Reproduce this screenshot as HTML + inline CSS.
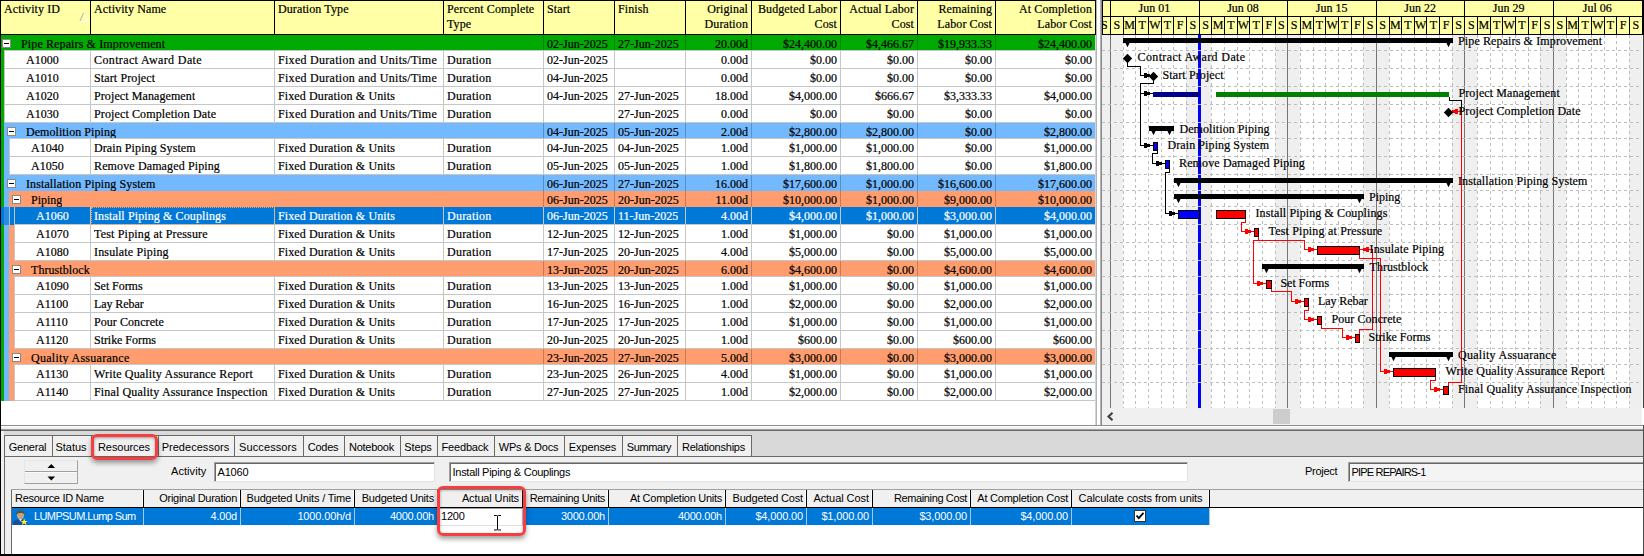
<!DOCTYPE html>
<html lang="en"><head><meta charset="utf-8"><title>P6 Activities</title><style>
html,body{margin:0;padding:0}
body{width:1644px;height:556px;overflow:hidden;background:#fff;position:relative;font-family:"Liberation Serif",serif;font-size:12px;color:#000}
#tbl div,#bp div,.b{position:absolute;box-sizing:content-box}
#tbl,#bp{position:absolute;left:0;top:0}
.hd{background:#000}
.hy{background:#FFFFA5}
.vs{width:1px;background:#000}
.ht{font-size:12px;line-height:15px;-webkit-text-stroke:.2px;white-space:nowrap;box-sizing:border-box!important;letter-spacing:.1px}
.t{white-space:nowrap;line-height:19px;-webkit-text-stroke:.2px;overflow:hidden;font-size:12px}
.t.r{text-align:right}
.t.w{color:#fff}
.hl{height:1px;background:#C6C6C6}
.cs{width:1px;background:#C6C6C6}
.gs{width:1px;background:rgba(0,0,0,.22)}
.ex{width:7px;height:7px;border:1px solid #8a8a8a;background:#fff}
.ex i{position:absolute;left:1px;top:3px;width:5px;height:1px;background:#000}
.foc{border:1px dotted #f3a25c}
svg text.gt{font-family:"Liberation Serif",serif;font-size:12px;fill:#000;stroke:#000;stroke-width:.2px}
svg text.gl{font-family:"Liberation Serif",serif;font-size:12px;fill:#000;stroke:#000;stroke-width:.2px}
#bp{font-family:"Liberation Sans",sans-serif;font-size:11px}
.tab{top:436px;height:20px;background:#f0f0f0;border-left:1px solid #696969;border-top:1px solid #696969;box-sizing:border-box!important;line-height:22px;text-align:center;white-space:nowrap;margin-top:-1px;height:21px;overflow:hidden;padding-right:2px}
.spin{background:#f0f0f0;border:1px solid #e6e6e6;border-right-color:#a0a0a0;border-bottom-color:#a0a0a0;box-sizing:border-box!important}
.spin .sl{left:0;top:10px;width:52px;height:1px;background:#a0a0a0;border-bottom:1px solid #fafafa}
.lb{line-height:18px;white-space:nowrap;font-size:11px}
.inp{background:#fff;border:1px solid #e3e3e3;border-top:1px solid #a0a0a0;border-left:1px solid #a0a0a0;box-shadow:inset 1px 1px 0 #696969;box-sizing:border-box!important;line-height:18px;padding-left:2.5px;white-space:nowrap;overflow:hidden}
.inp.ro{background:#f4f4f4}
.rh{line-height:16px;white-space:nowrap;box-sizing:border-box!important;height:17px;overflow:hidden}
.rv{line-height:17px;white-space:nowrap;box-sizing:border-box!important;height:17px;color:#fff}
.red{border:3px solid #f63d40;border-radius:6px;box-sizing:border-box!important;box-shadow:0 3px 5px rgba(0,0,0,.38),inset 0 1px 3px rgba(0,0,0,.35)}
</style></head><body>
<div id="tbl">
<div class="hd" style="left:0;top:0;width:1096px;height:35px"></div>
<div class="hy" style="left:1px;top:1px;width:1094px;height:33px"></div>
<div class="vs" style="left:90px;top:1px;height:33px"></div>
<div class="ht" style="left:1px;top:2px;width:89px;padding-left:3px">Activity ID</div>
<div class="vs" style="left:274px;top:1px;height:33px"></div>
<div class="ht" style="left:91px;top:2px;width:183px;padding-left:3px">Activity Name</div>
<div class="vs" style="left:443px;top:1px;height:33px"></div>
<div class="ht" style="left:275px;top:2px;width:168px;padding-left:3px">Duration Type</div>
<div class="vs" style="left:543px;top:1px;height:33px"></div>
<div class="ht" style="left:444px;top:2px;width:99px;padding-left:3px">Percent Complete<br>Type</div>
<div class="vs" style="left:614px;top:1px;height:33px"></div>
<div class="ht" style="left:544px;top:2px;width:70px;padding-left:3px">Start</div>
<div class="vs" style="left:685px;top:1px;height:33px"></div>
<div class="ht" style="left:615px;top:2px;width:70px;padding-left:3px">Finish</div>
<div class="vs" style="left:751px;top:1px;height:33px"></div>
<div class="ht" style="left:686px;top:2px;width:65px;padding-right:3px;text-align:right">Original<br>Duration</div>
<div class="vs" style="left:840px;top:1px;height:33px"></div>
<div class="ht" style="left:752px;top:2px;width:88px;padding-right:3px;text-align:right">Budgeted Labor<br>Cost</div>
<div class="vs" style="left:917px;top:1px;height:33px"></div>
<div class="ht" style="left:841px;top:2px;width:76px;padding-right:3px;text-align:right">Actual Labor<br>Cost</div>
<div class="vs" style="left:995px;top:1px;height:33px"></div>
<div class="ht" style="left:918px;top:2px;width:77px;padding-right:3px;text-align:right">Remaining<br>Labor Cost</div>
<div class="ht" style="left:996px;top:2px;width:99px;padding-right:3px;text-align:right">At Completion<br>Labor Cost</div>
<svg style="position:absolute;left:79px;top:12px" width="10" height="10"><path d="M5 1.5 L8.5 9.5 L1 9.5" fill="none" stroke="#fff" stroke-width="1"/><path d="M1 9 L4.5 1" fill="none" stroke="#b0b0b0" stroke-width="1"/></svg>
<div class="b" style="left:1px;top:35px;width:1094px;height:16px;background:#00AA00"></div>
<div class="ex" style="left:2px;top:39px"><i></i></div>
<div class="t" style="left:21px;top:35px;height:16px;letter-spacing:0.124px">Pipe Repairs &amp; Improvement</div>
<div class="gs" style="left:543px;top:35px;height:16px"></div>
<div class="t" style="left:547px;top:35px;height:16px">02-Jun-2025</div>
<div class="gs" style="left:614px;top:35px;height:16px"></div>
<div class="t" style="left:618px;top:35px;height:16px">27-Jun-2025</div>
<div class="gs" style="left:685px;top:35px;height:16px"></div>
<div class="t r" style="left:686px;width:62px;top:35px;height:16px">20.00d</div>
<div class="gs" style="left:751px;top:35px;height:16px"></div>
<div class="t r" style="left:752px;width:85px;top:35px;height:16px">$24,400.00</div>
<div class="gs" style="left:840px;top:35px;height:16px"></div>
<div class="t r" style="left:841px;width:73px;top:35px;height:16px">$4,466.67</div>
<div class="gs" style="left:917px;top:35px;height:16px"></div>
<div class="t r" style="left:918px;width:74px;top:35px;height:16px">$19,933.33</div>
<div class="gs" style="left:995px;top:35px;height:16px"></div>
<div class="t r" style="left:996px;width:96px;top:35px;height:16px">$24,400.00</div>
<div class="hl" style="left:4px;top:50px;width:1091px"></div>
<div class="b" style="left:1px;top:51px;width:3px;height:18px;background:#00AA00"></div>
<div class="b" style="left:4px;top:51px;width:1091px;height:17px;background:#fff;border-left:1px solid #C6C6C6"></div>
<div class="hl" style="left:4px;top:68px;width:1091px"></div>
<div class="t" style="left:26px;top:51px;height:18px">A1000</div>
<div class="cs" style="left:90px;top:51px;height:17px"></div>
<div class="t" style="left:94px;top:51px;height:18px;letter-spacing:0.376px">Contract Award Date</div>
<div class="cs" style="left:274px;top:51px;height:17px"></div>
<div class="t" style="left:278px;top:51px;height:18px;letter-spacing:0.291px">Fixed Duration and Units/Time</div>
<div class="cs" style="left:443px;top:51px;height:17px"></div>
<div class="t" style="left:447px;top:51px;height:18px;letter-spacing:0.23px">Duration</div>
<div class="cs" style="left:543px;top:51px;height:17px"></div>
<div class="t" style="left:547px;top:51px;height:18px;letter-spacing:0px">02-Jun-2025</div>
<div class="cs" style="left:614px;top:51px;height:17px"></div>
<div class="cs" style="left:685px;top:51px;height:17px"></div>
<div class="t r" style="left:686px;width:62px;top:51px;height:18px">0.00d</div>
<div class="cs" style="left:751px;top:51px;height:17px"></div>
<div class="t r" style="left:752px;width:85px;top:51px;height:18px">$0.00</div>
<div class="cs" style="left:840px;top:51px;height:17px"></div>
<div class="t r" style="left:841px;width:73px;top:51px;height:18px">$0.00</div>
<div class="cs" style="left:917px;top:51px;height:17px"></div>
<div class="t r" style="left:918px;width:74px;top:51px;height:18px">$0.00</div>
<div class="cs" style="left:995px;top:51px;height:17px"></div>
<div class="t r" style="left:996px;width:96px;top:51px;height:18px">$0.00</div>
<div class="b" style="left:1px;top:69px;width:3px;height:18px;background:#00AA00"></div>
<div class="b" style="left:4px;top:69px;width:1091px;height:17px;background:#fff;border-left:1px solid #C6C6C6"></div>
<div class="hl" style="left:4px;top:86px;width:1091px"></div>
<div class="t" style="left:26px;top:69px;height:18px">A1010</div>
<div class="cs" style="left:90px;top:69px;height:17px"></div>
<div class="t" style="left:94px;top:69px;height:18px;letter-spacing:0.119px">Start Project</div>
<div class="cs" style="left:274px;top:69px;height:17px"></div>
<div class="t" style="left:278px;top:69px;height:18px;letter-spacing:0.291px">Fixed Duration and Units/Time</div>
<div class="cs" style="left:443px;top:69px;height:17px"></div>
<div class="t" style="left:447px;top:69px;height:18px;letter-spacing:0.23px">Duration</div>
<div class="cs" style="left:543px;top:69px;height:17px"></div>
<div class="t" style="left:547px;top:69px;height:18px;letter-spacing:0px">04-Jun-2025</div>
<div class="cs" style="left:614px;top:69px;height:17px"></div>
<div class="cs" style="left:685px;top:69px;height:17px"></div>
<div class="t r" style="left:686px;width:62px;top:69px;height:18px">0.00d</div>
<div class="cs" style="left:751px;top:69px;height:17px"></div>
<div class="t r" style="left:752px;width:85px;top:69px;height:18px">$0.00</div>
<div class="cs" style="left:840px;top:69px;height:17px"></div>
<div class="t r" style="left:841px;width:73px;top:69px;height:18px">$0.00</div>
<div class="cs" style="left:917px;top:69px;height:17px"></div>
<div class="t r" style="left:918px;width:74px;top:69px;height:18px">$0.00</div>
<div class="cs" style="left:995px;top:69px;height:17px"></div>
<div class="t r" style="left:996px;width:96px;top:69px;height:18px">$0.00</div>
<div class="b" style="left:1px;top:87px;width:3px;height:18px;background:#00AA00"></div>
<div class="b" style="left:4px;top:87px;width:1091px;height:17px;background:#fff;border-left:1px solid #C6C6C6"></div>
<div class="hl" style="left:4px;top:104px;width:1091px"></div>
<div class="t" style="left:26px;top:87px;height:18px">A1020</div>
<div class="cs" style="left:90px;top:87px;height:17px"></div>
<div class="t" style="left:94px;top:87px;height:18px;letter-spacing:0.093px">Project Management</div>
<div class="cs" style="left:274px;top:87px;height:17px"></div>
<div class="t" style="left:278px;top:87px;height:18px;letter-spacing:0.121px">Fixed Duration &amp; Units</div>
<div class="cs" style="left:443px;top:87px;height:17px"></div>
<div class="t" style="left:447px;top:87px;height:18px;letter-spacing:0.23px">Duration</div>
<div class="cs" style="left:543px;top:87px;height:17px"></div>
<div class="t" style="left:547px;top:87px;height:18px;letter-spacing:0px">04-Jun-2025</div>
<div class="cs" style="left:614px;top:87px;height:17px"></div>
<div class="t" style="left:618px;top:87px;height:18px;letter-spacing:0px">27-Jun-2025</div>
<div class="cs" style="left:685px;top:87px;height:17px"></div>
<div class="t r" style="left:686px;width:62px;top:87px;height:18px">18.00d</div>
<div class="cs" style="left:751px;top:87px;height:17px"></div>
<div class="t r" style="left:752px;width:85px;top:87px;height:18px">$4,000.00</div>
<div class="cs" style="left:840px;top:87px;height:17px"></div>
<div class="t r" style="left:841px;width:73px;top:87px;height:18px">$666.67</div>
<div class="cs" style="left:917px;top:87px;height:17px"></div>
<div class="t r" style="left:918px;width:74px;top:87px;height:18px">$3,333.33</div>
<div class="cs" style="left:995px;top:87px;height:17px"></div>
<div class="t r" style="left:996px;width:96px;top:87px;height:18px">$4,000.00</div>
<div class="b" style="left:1px;top:105px;width:3px;height:18px;background:#00AA00"></div>
<div class="b" style="left:4px;top:105px;width:1091px;height:17px;background:#fff;border-left:1px solid #C6C6C6"></div>
<div class="hl" style="left:4px;top:122px;width:1091px"></div>
<div class="t" style="left:26px;top:105px;height:18px">A1030</div>
<div class="cs" style="left:90px;top:105px;height:17px"></div>
<div class="t" style="left:94px;top:105px;height:18px;letter-spacing:0.121px">Project Completion Date</div>
<div class="cs" style="left:274px;top:105px;height:17px"></div>
<div class="t" style="left:278px;top:105px;height:18px;letter-spacing:0.291px">Fixed Duration and Units/Time</div>
<div class="cs" style="left:443px;top:105px;height:17px"></div>
<div class="t" style="left:447px;top:105px;height:18px;letter-spacing:0.23px">Duration</div>
<div class="cs" style="left:543px;top:105px;height:17px"></div>
<div class="cs" style="left:614px;top:105px;height:17px"></div>
<div class="t" style="left:618px;top:105px;height:18px;letter-spacing:0px">27-Jun-2025</div>
<div class="cs" style="left:685px;top:105px;height:17px"></div>
<div class="t r" style="left:686px;width:62px;top:105px;height:18px">0.00d</div>
<div class="cs" style="left:751px;top:105px;height:17px"></div>
<div class="t r" style="left:752px;width:85px;top:105px;height:18px">$0.00</div>
<div class="cs" style="left:840px;top:105px;height:17px"></div>
<div class="t r" style="left:841px;width:73px;top:105px;height:18px">$0.00</div>
<div class="cs" style="left:917px;top:105px;height:17px"></div>
<div class="t r" style="left:918px;width:74px;top:105px;height:18px">$0.00</div>
<div class="cs" style="left:995px;top:105px;height:17px"></div>
<div class="t r" style="left:996px;width:96px;top:105px;height:18px">$0.00</div>
<div class="b" style="left:1px;top:123px;width:3px;height:16px;background:#00AA00"></div>
<div class="b" style="left:4px;top:123px;width:1091px;height:16px;background:#73B9FF"></div>
<div class="ex" style="left:7px;top:127px"><i></i></div>
<div class="t" style="left:26px;top:123px;height:16px;letter-spacing:0.059px">Demolition Piping</div>
<div class="gs" style="left:543px;top:123px;height:16px"></div>
<div class="t" style="left:547px;top:123px;height:16px">04-Jun-2025</div>
<div class="gs" style="left:614px;top:123px;height:16px"></div>
<div class="t" style="left:618px;top:123px;height:16px">05-Jun-2025</div>
<div class="gs" style="left:685px;top:123px;height:16px"></div>
<div class="t r" style="left:686px;width:62px;top:123px;height:16px">2.00d</div>
<div class="gs" style="left:751px;top:123px;height:16px"></div>
<div class="t r" style="left:752px;width:85px;top:123px;height:16px">$2,800.00</div>
<div class="gs" style="left:840px;top:123px;height:16px"></div>
<div class="t r" style="left:841px;width:73px;top:123px;height:16px">$2,800.00</div>
<div class="gs" style="left:917px;top:123px;height:16px"></div>
<div class="t r" style="left:918px;width:74px;top:123px;height:16px">$0.00</div>
<div class="gs" style="left:995px;top:123px;height:16px"></div>
<div class="t r" style="left:996px;width:96px;top:123px;height:16px">$2,800.00</div>
<div class="hl" style="left:9px;top:138px;width:1086px"></div>
<div class="b" style="left:1px;top:139px;width:3px;height:18px;background:#00AA00"></div>
<div class="b" style="left:4px;top:139px;width:5px;height:18px;background:#73B9FF"></div>
<div class="b" style="left:9px;top:139px;width:1086px;height:17px;background:#fff;border-left:1px solid #C6C6C6"></div>
<div class="hl" style="left:9px;top:156px;width:1086px"></div>
<div class="t" style="left:31px;top:139px;height:18px">A1040</div>
<div class="cs" style="left:90px;top:139px;height:17px"></div>
<div class="t" style="left:94px;top:139px;height:18px;letter-spacing:0.089px">Drain Piping System</div>
<div class="cs" style="left:274px;top:139px;height:17px"></div>
<div class="t" style="left:278px;top:139px;height:18px;letter-spacing:0.121px">Fixed Duration &amp; Units</div>
<div class="cs" style="left:443px;top:139px;height:17px"></div>
<div class="t" style="left:447px;top:139px;height:18px;letter-spacing:0.23px">Duration</div>
<div class="cs" style="left:543px;top:139px;height:17px"></div>
<div class="t" style="left:547px;top:139px;height:18px;letter-spacing:0px">04-Jun-2025</div>
<div class="cs" style="left:614px;top:139px;height:17px"></div>
<div class="t" style="left:618px;top:139px;height:18px;letter-spacing:0px">04-Jun-2025</div>
<div class="cs" style="left:685px;top:139px;height:17px"></div>
<div class="t r" style="left:686px;width:62px;top:139px;height:18px">1.00d</div>
<div class="cs" style="left:751px;top:139px;height:17px"></div>
<div class="t r" style="left:752px;width:85px;top:139px;height:18px">$1,000.00</div>
<div class="cs" style="left:840px;top:139px;height:17px"></div>
<div class="t r" style="left:841px;width:73px;top:139px;height:18px">$1,000.00</div>
<div class="cs" style="left:917px;top:139px;height:17px"></div>
<div class="t r" style="left:918px;width:74px;top:139px;height:18px">$0.00</div>
<div class="cs" style="left:995px;top:139px;height:17px"></div>
<div class="t r" style="left:996px;width:96px;top:139px;height:18px">$1,000.00</div>
<div class="b" style="left:1px;top:157px;width:3px;height:18px;background:#00AA00"></div>
<div class="b" style="left:4px;top:157px;width:5px;height:18px;background:#73B9FF"></div>
<div class="b" style="left:9px;top:157px;width:1086px;height:17px;background:#fff;border-left:1px solid #C6C6C6"></div>
<div class="hl" style="left:9px;top:174px;width:1086px"></div>
<div class="t" style="left:31px;top:157px;height:18px">A1050</div>
<div class="cs" style="left:90px;top:157px;height:17px"></div>
<div class="t" style="left:94px;top:157px;height:18px;letter-spacing:0.128px">Remove Damaged Piping</div>
<div class="cs" style="left:274px;top:157px;height:17px"></div>
<div class="t" style="left:278px;top:157px;height:18px;letter-spacing:0.121px">Fixed Duration &amp; Units</div>
<div class="cs" style="left:443px;top:157px;height:17px"></div>
<div class="t" style="left:447px;top:157px;height:18px;letter-spacing:0.23px">Duration</div>
<div class="cs" style="left:543px;top:157px;height:17px"></div>
<div class="t" style="left:547px;top:157px;height:18px;letter-spacing:0px">05-Jun-2025</div>
<div class="cs" style="left:614px;top:157px;height:17px"></div>
<div class="t" style="left:618px;top:157px;height:18px;letter-spacing:0px">05-Jun-2025</div>
<div class="cs" style="left:685px;top:157px;height:17px"></div>
<div class="t r" style="left:686px;width:62px;top:157px;height:18px">1.00d</div>
<div class="cs" style="left:751px;top:157px;height:17px"></div>
<div class="t r" style="left:752px;width:85px;top:157px;height:18px">$1,800.00</div>
<div class="cs" style="left:840px;top:157px;height:17px"></div>
<div class="t r" style="left:841px;width:73px;top:157px;height:18px">$1,800.00</div>
<div class="cs" style="left:917px;top:157px;height:17px"></div>
<div class="t r" style="left:918px;width:74px;top:157px;height:18px">$0.00</div>
<div class="cs" style="left:995px;top:157px;height:17px"></div>
<div class="t r" style="left:996px;width:96px;top:157px;height:18px">$1,800.00</div>
<div class="b" style="left:1px;top:175px;width:3px;height:16px;background:#00AA00"></div>
<div class="b" style="left:4px;top:175px;width:1091px;height:16px;background:#73B9FF"></div>
<div class="ex" style="left:7px;top:179px"><i></i></div>
<div class="t" style="left:26px;top:175px;height:16px;letter-spacing:0.109px">Installation Piping System</div>
<div class="gs" style="left:543px;top:175px;height:16px"></div>
<div class="t" style="left:547px;top:175px;height:16px">06-Jun-2025</div>
<div class="gs" style="left:614px;top:175px;height:16px"></div>
<div class="t" style="left:618px;top:175px;height:16px">27-Jun-2025</div>
<div class="gs" style="left:685px;top:175px;height:16px"></div>
<div class="t r" style="left:686px;width:62px;top:175px;height:16px">16.00d</div>
<div class="gs" style="left:751px;top:175px;height:16px"></div>
<div class="t r" style="left:752px;width:85px;top:175px;height:16px">$17,600.00</div>
<div class="gs" style="left:840px;top:175px;height:16px"></div>
<div class="t r" style="left:841px;width:73px;top:175px;height:16px">$1,000.00</div>
<div class="gs" style="left:917px;top:175px;height:16px"></div>
<div class="t r" style="left:918px;width:74px;top:175px;height:16px">$16,600.00</div>
<div class="gs" style="left:995px;top:175px;height:16px"></div>
<div class="t r" style="left:996px;width:96px;top:175px;height:16px">$17,600.00</div>
<div class="b" style="left:1px;top:191px;width:3px;height:16px;background:#00AA00"></div>
<div class="b" style="left:4px;top:191px;width:5px;height:16px;background:#73B9FF"></div>
<div class="b" style="left:9px;top:191px;width:1086px;height:16px;background:#FF9D6E"></div>
<div class="ex" style="left:12px;top:195px"><i></i></div>
<div class="t" style="left:31px;top:191px;height:16px;letter-spacing:-0.007px">Piping</div>
<div class="gs" style="left:543px;top:191px;height:16px"></div>
<div class="t" style="left:547px;top:191px;height:16px">06-Jun-2025</div>
<div class="gs" style="left:614px;top:191px;height:16px"></div>
<div class="t" style="left:618px;top:191px;height:16px">20-Jun-2025</div>
<div class="gs" style="left:685px;top:191px;height:16px"></div>
<div class="t r" style="left:686px;width:62px;top:191px;height:16px">11.00d</div>
<div class="gs" style="left:751px;top:191px;height:16px"></div>
<div class="t r" style="left:752px;width:85px;top:191px;height:16px">$10,000.00</div>
<div class="gs" style="left:840px;top:191px;height:16px"></div>
<div class="t r" style="left:841px;width:73px;top:191px;height:16px">$1,000.00</div>
<div class="gs" style="left:917px;top:191px;height:16px"></div>
<div class="t r" style="left:918px;width:74px;top:191px;height:16px">$9,000.00</div>
<div class="gs" style="left:995px;top:191px;height:16px"></div>
<div class="t r" style="left:996px;width:96px;top:191px;height:16px">$10,000.00</div>
<div class="b" style="left:1px;top:207px;width:3px;height:18px;background:#0078D7"></div>
<div class="b" style="left:4px;top:207px;width:5px;height:18px;background:#0078D7"></div>
<div class="b" style="left:9px;top:207px;width:5px;height:18px;background:#0078D7"></div>
<div class="b" style="left:14px;top:207px;width:1081px;height:17px;background:#0078D7;border-left:1px solid #C6C6C6"></div>
<div class="hl" style="left:14px;top:224px;width:1081px"></div>
<div class="b" style="left:4px;top:207px;width:5px;height:18px;background:#2b8de0"></div>
<div class="b" style="left:9px;top:207px;width:1px;height:18px;background:#9cc7ee"></div>
<div class="t w" style="left:36px;top:207px;height:18px">A1060</div>
<div class="cs" style="left:90px;top:207px;height:17px"></div>
<div class="t w" style="left:94px;top:207px;height:18px;letter-spacing:0.115px">Install Piping &amp; Couplings</div>
<div class="cs" style="left:274px;top:207px;height:17px"></div>
<div class="t w" style="left:278px;top:207px;height:18px;letter-spacing:0.121px">Fixed Duration &amp; Units</div>
<div class="cs" style="left:443px;top:207px;height:17px"></div>
<div class="t w" style="left:447px;top:207px;height:18px;letter-spacing:0.23px">Duration</div>
<div class="cs" style="left:543px;top:207px;height:17px"></div>
<div class="t w" style="left:547px;top:207px;height:18px;letter-spacing:0px">06-Jun-2025</div>
<div class="cs" style="left:614px;top:207px;height:17px"></div>
<div class="t w" style="left:618px;top:207px;height:18px;letter-spacing:0px">11-Jun-2025</div>
<div class="cs" style="left:685px;top:207px;height:17px"></div>
<div class="t w r" style="left:686px;width:62px;top:207px;height:18px">4.00d</div>
<div class="cs" style="left:751px;top:207px;height:17px"></div>
<div class="t w r" style="left:752px;width:85px;top:207px;height:18px">$4,000.00</div>
<div class="cs" style="left:840px;top:207px;height:17px"></div>
<div class="t w r" style="left:841px;width:73px;top:207px;height:18px">$1,000.00</div>
<div class="cs" style="left:917px;top:207px;height:17px"></div>
<div class="t w r" style="left:918px;width:74px;top:207px;height:18px">$3,000.00</div>
<div class="cs" style="left:995px;top:207px;height:17px"></div>
<div class="t w r" style="left:996px;width:96px;top:207px;height:18px">$4,000.00</div>
<div class="foc" style="left:91px;top:207px;width:182px;height:16px"></div>
<div class="b" style="left:1px;top:225px;width:3px;height:18px;background:#00AA00"></div>
<div class="b" style="left:4px;top:225px;width:5px;height:18px;background:#73B9FF"></div>
<div class="b" style="left:9px;top:225px;width:5px;height:18px;background:#FF9D6E"></div>
<div class="b" style="left:14px;top:225px;width:1081px;height:17px;background:#fff;border-left:1px solid #C6C6C6"></div>
<div class="hl" style="left:14px;top:242px;width:1081px"></div>
<div class="t" style="left:36px;top:225px;height:18px">A1070</div>
<div class="cs" style="left:90px;top:225px;height:17px"></div>
<div class="t" style="left:94px;top:225px;height:18px;letter-spacing:0.188px">Test Piping at Pressure</div>
<div class="cs" style="left:274px;top:225px;height:17px"></div>
<div class="t" style="left:278px;top:225px;height:18px;letter-spacing:0.121px">Fixed Duration &amp; Units</div>
<div class="cs" style="left:443px;top:225px;height:17px"></div>
<div class="t" style="left:447px;top:225px;height:18px;letter-spacing:0.23px">Duration</div>
<div class="cs" style="left:543px;top:225px;height:17px"></div>
<div class="t" style="left:547px;top:225px;height:18px;letter-spacing:0px">12-Jun-2025</div>
<div class="cs" style="left:614px;top:225px;height:17px"></div>
<div class="t" style="left:618px;top:225px;height:18px;letter-spacing:0px">12-Jun-2025</div>
<div class="cs" style="left:685px;top:225px;height:17px"></div>
<div class="t r" style="left:686px;width:62px;top:225px;height:18px">1.00d</div>
<div class="cs" style="left:751px;top:225px;height:17px"></div>
<div class="t r" style="left:752px;width:85px;top:225px;height:18px">$1,000.00</div>
<div class="cs" style="left:840px;top:225px;height:17px"></div>
<div class="t r" style="left:841px;width:73px;top:225px;height:18px">$0.00</div>
<div class="cs" style="left:917px;top:225px;height:17px"></div>
<div class="t r" style="left:918px;width:74px;top:225px;height:18px">$1,000.00</div>
<div class="cs" style="left:995px;top:225px;height:17px"></div>
<div class="t r" style="left:996px;width:96px;top:225px;height:18px">$1,000.00</div>
<div class="b" style="left:1px;top:243px;width:3px;height:18px;background:#00AA00"></div>
<div class="b" style="left:4px;top:243px;width:5px;height:18px;background:#73B9FF"></div>
<div class="b" style="left:9px;top:243px;width:5px;height:18px;background:#FF9D6E"></div>
<div class="b" style="left:14px;top:243px;width:1081px;height:17px;background:#fff;border-left:1px solid #C6C6C6"></div>
<div class="hl" style="left:14px;top:260px;width:1081px"></div>
<div class="t" style="left:36px;top:243px;height:18px">A1080</div>
<div class="cs" style="left:90px;top:243px;height:17px"></div>
<div class="t" style="left:94px;top:243px;height:18px;letter-spacing:0.158px">Insulate Piping</div>
<div class="cs" style="left:274px;top:243px;height:17px"></div>
<div class="t" style="left:278px;top:243px;height:18px;letter-spacing:0.121px">Fixed Duration &amp; Units</div>
<div class="cs" style="left:443px;top:243px;height:17px"></div>
<div class="t" style="left:447px;top:243px;height:18px;letter-spacing:0.23px">Duration</div>
<div class="cs" style="left:543px;top:243px;height:17px"></div>
<div class="t" style="left:547px;top:243px;height:18px;letter-spacing:0px">17-Jun-2025</div>
<div class="cs" style="left:614px;top:243px;height:17px"></div>
<div class="t" style="left:618px;top:243px;height:18px;letter-spacing:0px">20-Jun-2025</div>
<div class="cs" style="left:685px;top:243px;height:17px"></div>
<div class="t r" style="left:686px;width:62px;top:243px;height:18px">4.00d</div>
<div class="cs" style="left:751px;top:243px;height:17px"></div>
<div class="t r" style="left:752px;width:85px;top:243px;height:18px">$5,000.00</div>
<div class="cs" style="left:840px;top:243px;height:17px"></div>
<div class="t r" style="left:841px;width:73px;top:243px;height:18px">$0.00</div>
<div class="cs" style="left:917px;top:243px;height:17px"></div>
<div class="t r" style="left:918px;width:74px;top:243px;height:18px">$5,000.00</div>
<div class="cs" style="left:995px;top:243px;height:17px"></div>
<div class="t r" style="left:996px;width:96px;top:243px;height:18px">$5,000.00</div>
<div class="b" style="left:1px;top:261px;width:3px;height:16px;background:#00AA00"></div>
<div class="b" style="left:4px;top:261px;width:5px;height:16px;background:#73B9FF"></div>
<div class="b" style="left:9px;top:261px;width:1086px;height:16px;background:#FF9D6E"></div>
<div class="ex" style="left:12px;top:265px"><i></i></div>
<div class="t" style="left:31px;top:261px;height:16px;letter-spacing:0.074px">Thrustblock</div>
<div class="gs" style="left:543px;top:261px;height:16px"></div>
<div class="t" style="left:547px;top:261px;height:16px">13-Jun-2025</div>
<div class="gs" style="left:614px;top:261px;height:16px"></div>
<div class="t" style="left:618px;top:261px;height:16px">20-Jun-2025</div>
<div class="gs" style="left:685px;top:261px;height:16px"></div>
<div class="t r" style="left:686px;width:62px;top:261px;height:16px">6.00d</div>
<div class="gs" style="left:751px;top:261px;height:16px"></div>
<div class="t r" style="left:752px;width:85px;top:261px;height:16px">$4,600.00</div>
<div class="gs" style="left:840px;top:261px;height:16px"></div>
<div class="t r" style="left:841px;width:73px;top:261px;height:16px">$0.00</div>
<div class="gs" style="left:917px;top:261px;height:16px"></div>
<div class="t r" style="left:918px;width:74px;top:261px;height:16px">$4,600.00</div>
<div class="gs" style="left:995px;top:261px;height:16px"></div>
<div class="t r" style="left:996px;width:96px;top:261px;height:16px">$4,600.00</div>
<div class="hl" style="left:14px;top:276px;width:1081px"></div>
<div class="b" style="left:1px;top:277px;width:3px;height:18px;background:#00AA00"></div>
<div class="b" style="left:4px;top:277px;width:5px;height:18px;background:#73B9FF"></div>
<div class="b" style="left:9px;top:277px;width:5px;height:18px;background:#FF9D6E"></div>
<div class="b" style="left:14px;top:277px;width:1081px;height:17px;background:#fff;border-left:1px solid #C6C6C6"></div>
<div class="hl" style="left:14px;top:294px;width:1081px"></div>
<div class="t" style="left:36px;top:277px;height:18px">A1090</div>
<div class="cs" style="left:90px;top:277px;height:17px"></div>
<div class="t" style="left:94px;top:277px;height:18px;letter-spacing:-0.056px">Set Forms</div>
<div class="cs" style="left:274px;top:277px;height:17px"></div>
<div class="t" style="left:278px;top:277px;height:18px;letter-spacing:0.121px">Fixed Duration &amp; Units</div>
<div class="cs" style="left:443px;top:277px;height:17px"></div>
<div class="t" style="left:447px;top:277px;height:18px;letter-spacing:0.23px">Duration</div>
<div class="cs" style="left:543px;top:277px;height:17px"></div>
<div class="t" style="left:547px;top:277px;height:18px;letter-spacing:0px">13-Jun-2025</div>
<div class="cs" style="left:614px;top:277px;height:17px"></div>
<div class="t" style="left:618px;top:277px;height:18px;letter-spacing:0px">13-Jun-2025</div>
<div class="cs" style="left:685px;top:277px;height:17px"></div>
<div class="t r" style="left:686px;width:62px;top:277px;height:18px">1.00d</div>
<div class="cs" style="left:751px;top:277px;height:17px"></div>
<div class="t r" style="left:752px;width:85px;top:277px;height:18px">$1,000.00</div>
<div class="cs" style="left:840px;top:277px;height:17px"></div>
<div class="t r" style="left:841px;width:73px;top:277px;height:18px">$0.00</div>
<div class="cs" style="left:917px;top:277px;height:17px"></div>
<div class="t r" style="left:918px;width:74px;top:277px;height:18px">$1,000.00</div>
<div class="cs" style="left:995px;top:277px;height:17px"></div>
<div class="t r" style="left:996px;width:96px;top:277px;height:18px">$1,000.00</div>
<div class="b" style="left:1px;top:295px;width:3px;height:18px;background:#00AA00"></div>
<div class="b" style="left:4px;top:295px;width:5px;height:18px;background:#73B9FF"></div>
<div class="b" style="left:9px;top:295px;width:5px;height:18px;background:#FF9D6E"></div>
<div class="b" style="left:14px;top:295px;width:1081px;height:17px;background:#fff;border-left:1px solid #C6C6C6"></div>
<div class="hl" style="left:14px;top:312px;width:1081px"></div>
<div class="t" style="left:36px;top:295px;height:18px">A1100</div>
<div class="cs" style="left:90px;top:295px;height:17px"></div>
<div class="t" style="left:94px;top:295px;height:18px;letter-spacing:-0.079px">Lay Rebar</div>
<div class="cs" style="left:274px;top:295px;height:17px"></div>
<div class="t" style="left:278px;top:295px;height:18px;letter-spacing:0.121px">Fixed Duration &amp; Units</div>
<div class="cs" style="left:443px;top:295px;height:17px"></div>
<div class="t" style="left:447px;top:295px;height:18px;letter-spacing:0.23px">Duration</div>
<div class="cs" style="left:543px;top:295px;height:17px"></div>
<div class="t" style="left:547px;top:295px;height:18px;letter-spacing:0px">16-Jun-2025</div>
<div class="cs" style="left:614px;top:295px;height:17px"></div>
<div class="t" style="left:618px;top:295px;height:18px;letter-spacing:0px">16-Jun-2025</div>
<div class="cs" style="left:685px;top:295px;height:17px"></div>
<div class="t r" style="left:686px;width:62px;top:295px;height:18px">1.00d</div>
<div class="cs" style="left:751px;top:295px;height:17px"></div>
<div class="t r" style="left:752px;width:85px;top:295px;height:18px">$2,000.00</div>
<div class="cs" style="left:840px;top:295px;height:17px"></div>
<div class="t r" style="left:841px;width:73px;top:295px;height:18px">$0.00</div>
<div class="cs" style="left:917px;top:295px;height:17px"></div>
<div class="t r" style="left:918px;width:74px;top:295px;height:18px">$2,000.00</div>
<div class="cs" style="left:995px;top:295px;height:17px"></div>
<div class="t r" style="left:996px;width:96px;top:295px;height:18px">$2,000.00</div>
<div class="b" style="left:1px;top:313px;width:3px;height:18px;background:#00AA00"></div>
<div class="b" style="left:4px;top:313px;width:5px;height:18px;background:#73B9FF"></div>
<div class="b" style="left:9px;top:313px;width:5px;height:18px;background:#FF9D6E"></div>
<div class="b" style="left:14px;top:313px;width:1081px;height:17px;background:#fff;border-left:1px solid #C6C6C6"></div>
<div class="hl" style="left:14px;top:330px;width:1081px"></div>
<div class="t" style="left:36px;top:313px;height:18px">A1110</div>
<div class="cs" style="left:90px;top:313px;height:17px"></div>
<div class="t" style="left:94px;top:313px;height:18px;letter-spacing:0.063px">Pour Concrete</div>
<div class="cs" style="left:274px;top:313px;height:17px"></div>
<div class="t" style="left:278px;top:313px;height:18px;letter-spacing:0.121px">Fixed Duration &amp; Units</div>
<div class="cs" style="left:443px;top:313px;height:17px"></div>
<div class="t" style="left:447px;top:313px;height:18px;letter-spacing:0.23px">Duration</div>
<div class="cs" style="left:543px;top:313px;height:17px"></div>
<div class="t" style="left:547px;top:313px;height:18px;letter-spacing:0px">17-Jun-2025</div>
<div class="cs" style="left:614px;top:313px;height:17px"></div>
<div class="t" style="left:618px;top:313px;height:18px;letter-spacing:0px">17-Jun-2025</div>
<div class="cs" style="left:685px;top:313px;height:17px"></div>
<div class="t r" style="left:686px;width:62px;top:313px;height:18px">1.00d</div>
<div class="cs" style="left:751px;top:313px;height:17px"></div>
<div class="t r" style="left:752px;width:85px;top:313px;height:18px">$1,000.00</div>
<div class="cs" style="left:840px;top:313px;height:17px"></div>
<div class="t r" style="left:841px;width:73px;top:313px;height:18px">$0.00</div>
<div class="cs" style="left:917px;top:313px;height:17px"></div>
<div class="t r" style="left:918px;width:74px;top:313px;height:18px">$1,000.00</div>
<div class="cs" style="left:995px;top:313px;height:17px"></div>
<div class="t r" style="left:996px;width:96px;top:313px;height:18px">$1,000.00</div>
<div class="b" style="left:1px;top:331px;width:3px;height:18px;background:#00AA00"></div>
<div class="b" style="left:4px;top:331px;width:5px;height:18px;background:#73B9FF"></div>
<div class="b" style="left:9px;top:331px;width:5px;height:18px;background:#FF9D6E"></div>
<div class="b" style="left:14px;top:331px;width:1081px;height:17px;background:#fff;border-left:1px solid #C6C6C6"></div>
<div class="hl" style="left:14px;top:348px;width:1081px"></div>
<div class="t" style="left:36px;top:331px;height:18px">A1120</div>
<div class="cs" style="left:90px;top:331px;height:17px"></div>
<div class="t" style="left:94px;top:331px;height:18px;letter-spacing:-0.045px">Strike Forms</div>
<div class="cs" style="left:274px;top:331px;height:17px"></div>
<div class="t" style="left:278px;top:331px;height:18px;letter-spacing:0.121px">Fixed Duration &amp; Units</div>
<div class="cs" style="left:443px;top:331px;height:17px"></div>
<div class="t" style="left:447px;top:331px;height:18px;letter-spacing:0.23px">Duration</div>
<div class="cs" style="left:543px;top:331px;height:17px"></div>
<div class="t" style="left:547px;top:331px;height:18px;letter-spacing:0px">20-Jun-2025</div>
<div class="cs" style="left:614px;top:331px;height:17px"></div>
<div class="t" style="left:618px;top:331px;height:18px;letter-spacing:0px">20-Jun-2025</div>
<div class="cs" style="left:685px;top:331px;height:17px"></div>
<div class="t r" style="left:686px;width:62px;top:331px;height:18px">1.00d</div>
<div class="cs" style="left:751px;top:331px;height:17px"></div>
<div class="t r" style="left:752px;width:85px;top:331px;height:18px">$600.00</div>
<div class="cs" style="left:840px;top:331px;height:17px"></div>
<div class="t r" style="left:841px;width:73px;top:331px;height:18px">$0.00</div>
<div class="cs" style="left:917px;top:331px;height:17px"></div>
<div class="t r" style="left:918px;width:74px;top:331px;height:18px">$600.00</div>
<div class="cs" style="left:995px;top:331px;height:17px"></div>
<div class="t r" style="left:996px;width:96px;top:331px;height:18px">$600.00</div>
<div class="b" style="left:1px;top:349px;width:3px;height:16px;background:#00AA00"></div>
<div class="b" style="left:4px;top:349px;width:5px;height:16px;background:#73B9FF"></div>
<div class="b" style="left:9px;top:349px;width:1086px;height:16px;background:#FF9D6E"></div>
<div class="ex" style="left:12px;top:353px"><i></i></div>
<div class="t" style="left:31px;top:349px;height:16px;letter-spacing:0.27px">Quality Assuarance</div>
<div class="gs" style="left:543px;top:349px;height:16px"></div>
<div class="t" style="left:547px;top:349px;height:16px">23-Jun-2025</div>
<div class="gs" style="left:614px;top:349px;height:16px"></div>
<div class="t" style="left:618px;top:349px;height:16px">27-Jun-2025</div>
<div class="gs" style="left:685px;top:349px;height:16px"></div>
<div class="t r" style="left:686px;width:62px;top:349px;height:16px">5.00d</div>
<div class="gs" style="left:751px;top:349px;height:16px"></div>
<div class="t r" style="left:752px;width:85px;top:349px;height:16px">$3,000.00</div>
<div class="gs" style="left:840px;top:349px;height:16px"></div>
<div class="t r" style="left:841px;width:73px;top:349px;height:16px">$0.00</div>
<div class="gs" style="left:917px;top:349px;height:16px"></div>
<div class="t r" style="left:918px;width:74px;top:349px;height:16px">$3,000.00</div>
<div class="gs" style="left:995px;top:349px;height:16px"></div>
<div class="t r" style="left:996px;width:96px;top:349px;height:16px">$3,000.00</div>
<div class="hl" style="left:14px;top:364px;width:1081px"></div>
<div class="b" style="left:1px;top:365px;width:3px;height:18px;background:#00AA00"></div>
<div class="b" style="left:4px;top:365px;width:5px;height:18px;background:#73B9FF"></div>
<div class="b" style="left:9px;top:365px;width:5px;height:18px;background:#FF9D6E"></div>
<div class="b" style="left:14px;top:365px;width:1081px;height:17px;background:#fff;border-left:1px solid #C6C6C6"></div>
<div class="hl" style="left:14px;top:382px;width:1081px"></div>
<div class="t" style="left:36px;top:365px;height:18px">A1130</div>
<div class="cs" style="left:90px;top:365px;height:17px"></div>
<div class="t" style="left:94px;top:365px;height:18px;letter-spacing:0.17px">Write Quality Assurance Report</div>
<div class="cs" style="left:274px;top:365px;height:17px"></div>
<div class="t" style="left:278px;top:365px;height:18px;letter-spacing:0.121px">Fixed Duration &amp; Units</div>
<div class="cs" style="left:443px;top:365px;height:17px"></div>
<div class="t" style="left:447px;top:365px;height:18px;letter-spacing:0.23px">Duration</div>
<div class="cs" style="left:543px;top:365px;height:17px"></div>
<div class="t" style="left:547px;top:365px;height:18px;letter-spacing:0px">23-Jun-2025</div>
<div class="cs" style="left:614px;top:365px;height:17px"></div>
<div class="t" style="left:618px;top:365px;height:18px;letter-spacing:0px">26-Jun-2025</div>
<div class="cs" style="left:685px;top:365px;height:17px"></div>
<div class="t r" style="left:686px;width:62px;top:365px;height:18px">4.00d</div>
<div class="cs" style="left:751px;top:365px;height:17px"></div>
<div class="t r" style="left:752px;width:85px;top:365px;height:18px">$1,000.00</div>
<div class="cs" style="left:840px;top:365px;height:17px"></div>
<div class="t r" style="left:841px;width:73px;top:365px;height:18px">$0.00</div>
<div class="cs" style="left:917px;top:365px;height:17px"></div>
<div class="t r" style="left:918px;width:74px;top:365px;height:18px">$1,000.00</div>
<div class="cs" style="left:995px;top:365px;height:17px"></div>
<div class="t r" style="left:996px;width:96px;top:365px;height:18px">$1,000.00</div>
<div class="b" style="left:1px;top:383px;width:3px;height:18px;background:#00AA00"></div>
<div class="b" style="left:4px;top:383px;width:5px;height:18px;background:#73B9FF"></div>
<div class="b" style="left:9px;top:383px;width:5px;height:18px;background:#FF9D6E"></div>
<div class="b" style="left:14px;top:383px;width:1081px;height:17px;background:#fff;border-left:1px solid #C6C6C6"></div>
<div class="hl" style="left:14px;top:400px;width:1081px"></div>
<div class="t" style="left:36px;top:383px;height:18px">A1140</div>
<div class="cs" style="left:90px;top:383px;height:17px"></div>
<div class="t" style="left:94px;top:383px;height:18px;letter-spacing:0.139px">Final Quality Assurance Inspection</div>
<div class="cs" style="left:274px;top:383px;height:17px"></div>
<div class="t" style="left:278px;top:383px;height:18px;letter-spacing:0.121px">Fixed Duration &amp; Units</div>
<div class="cs" style="left:443px;top:383px;height:17px"></div>
<div class="t" style="left:447px;top:383px;height:18px;letter-spacing:0.23px">Duration</div>
<div class="cs" style="left:543px;top:383px;height:17px"></div>
<div class="t" style="left:547px;top:383px;height:18px;letter-spacing:0px">27-Jun-2025</div>
<div class="cs" style="left:614px;top:383px;height:17px"></div>
<div class="t" style="left:618px;top:383px;height:18px;letter-spacing:0px">27-Jun-2025</div>
<div class="cs" style="left:685px;top:383px;height:17px"></div>
<div class="t r" style="left:686px;width:62px;top:383px;height:18px">1.00d</div>
<div class="cs" style="left:751px;top:383px;height:17px"></div>
<div class="t r" style="left:752px;width:85px;top:383px;height:18px">$2,000.00</div>
<div class="cs" style="left:840px;top:383px;height:17px"></div>
<div class="t r" style="left:841px;width:73px;top:383px;height:18px">$0.00</div>
<div class="cs" style="left:917px;top:383px;height:17px"></div>
<div class="t r" style="left:918px;width:74px;top:383px;height:18px">$2,000.00</div>
<div class="cs" style="left:995px;top:383px;height:17px"></div>
<div class="t r" style="left:996px;width:96px;top:383px;height:18px">$2,000.00</div>
</div>
<div class="b" style="left:1095px;top:0;width:1px;height:35px;background:#000"></div>
<div class="b" style="left:1095px;top:35px;width:1px;height:390px;background:#d4d4d4"></div>
<div class="b" style="left:1096px;top:0;width:1px;height:425px;background:#b4b4b4"></div>
<div class="b" style="left:1097px;top:0;width:3px;height:425px;background:#fff"></div>
<div class="b" style="left:1100px;top:0;width:1px;height:425px;background:#b0b0b0"></div>
<div class="b" style="left:1101px;top:0;width:1px;height:425px;background:#8c8c8c"></div>
<div class="b" style="left:1102px;top:0;width:1px;height:35px;background:#000"></div>
<svg id="g" width="540" height="425" viewBox="1102 0 540 425" style="position:absolute;left:1102px;top:0">
<g shape-rendering="crispEdges">
<rect x="1102" y="0" width="540" height="35" fill="#000"/>
<rect x="1103" y="1" width="539" height="15" fill="#FFFFA5"/>
<rect x="1103" y="17" width="539" height="17" fill="#FFFFA5"/>
<rect x="1102" y="35" width="540" height="373" fill="#fff"/>
<rect x="1102" y="35" width="8" height="373" fill="#EFEFEF"/>
<rect x="1110" y="35" width="13" height="373" fill="#EFEFEF"/>
<rect x="1186" y="35" width="13" height="373" fill="#EFEFEF"/>
<rect x="1199" y="35" width="12" height="373" fill="#EFEFEF"/>
<rect x="1275" y="35" width="12" height="373" fill="#EFEFEF"/>
<rect x="1287" y="35" width="13" height="373" fill="#EFEFEF"/>
<rect x="1363" y="35" width="13" height="373" fill="#EFEFEF"/>
<rect x="1376" y="35" width="13" height="373" fill="#EFEFEF"/>
<rect x="1452" y="35" width="12" height="373" fill="#EFEFEF"/>
<rect x="1464" y="35" width="13" height="373" fill="#EFEFEF"/>
<rect x="1540" y="35" width="13" height="373" fill="#EFEFEF"/>
<rect x="1553" y="35" width="13" height="373" fill="#EFEFEF"/>
<rect x="1629" y="35" width="13" height="373" fill="#EFEFEF"/>
<line x1="1110.5" x2="1110.5" y1="1" y2="34" stroke="#000"/>
<line x1="1110.5" x2="1110.5" y1="35" y2="408" stroke="#747474"/>
<line x1="1123.5" x2="1123.5" y1="17" y2="34" stroke="#000"/>
<line x1="1123.5" x2="1123.5" y1="35" y2="408" stroke="#BDBDBD" stroke-dasharray="3 3"/>
<line x1="1135.5" x2="1135.5" y1="17" y2="34" stroke="#000"/>
<line x1="1135.5" x2="1135.5" y1="35" y2="408" stroke="#BDBDBD" stroke-dasharray="3 3"/>
<line x1="1148.5" x2="1148.5" y1="17" y2="34" stroke="#000"/>
<line x1="1148.5" x2="1148.5" y1="35" y2="408" stroke="#BDBDBD" stroke-dasharray="3 3"/>
<line x1="1161.5" x2="1161.5" y1="17" y2="34" stroke="#000"/>
<line x1="1161.5" x2="1161.5" y1="35" y2="408" stroke="#BDBDBD" stroke-dasharray="3 3"/>
<line x1="1173.5" x2="1173.5" y1="17" y2="34" stroke="#000"/>
<line x1="1173.5" x2="1173.5" y1="35" y2="408" stroke="#BDBDBD" stroke-dasharray="3 3"/>
<line x1="1186.5" x2="1186.5" y1="17" y2="34" stroke="#000"/>
<line x1="1186.5" x2="1186.5" y1="35" y2="408" stroke="#BDBDBD" stroke-dasharray="3 3"/>
<line x1="1199.5" x2="1199.5" y1="1" y2="34" stroke="#000"/>
<line x1="1199.5" x2="1199.5" y1="35" y2="408" stroke="#747474"/>
<line x1="1211.5" x2="1211.5" y1="17" y2="34" stroke="#000"/>
<line x1="1211.5" x2="1211.5" y1="35" y2="408" stroke="#BDBDBD" stroke-dasharray="3 3"/>
<line x1="1224.5" x2="1224.5" y1="17" y2="34" stroke="#000"/>
<line x1="1224.5" x2="1224.5" y1="35" y2="408" stroke="#BDBDBD" stroke-dasharray="3 3"/>
<line x1="1237.5" x2="1237.5" y1="17" y2="34" stroke="#000"/>
<line x1="1237.5" x2="1237.5" y1="35" y2="408" stroke="#BDBDBD" stroke-dasharray="3 3"/>
<line x1="1249.5" x2="1249.5" y1="17" y2="34" stroke="#000"/>
<line x1="1249.5" x2="1249.5" y1="35" y2="408" stroke="#BDBDBD" stroke-dasharray="3 3"/>
<line x1="1262.5" x2="1262.5" y1="17" y2="34" stroke="#000"/>
<line x1="1262.5" x2="1262.5" y1="35" y2="408" stroke="#BDBDBD" stroke-dasharray="3 3"/>
<line x1="1275.5" x2="1275.5" y1="17" y2="34" stroke="#000"/>
<line x1="1275.5" x2="1275.5" y1="35" y2="408" stroke="#BDBDBD" stroke-dasharray="3 3"/>
<line x1="1287.5" x2="1287.5" y1="1" y2="34" stroke="#000"/>
<line x1="1287.5" x2="1287.5" y1="35" y2="408" stroke="#747474"/>
<line x1="1300.5" x2="1300.5" y1="17" y2="34" stroke="#000"/>
<line x1="1300.5" x2="1300.5" y1="35" y2="408" stroke="#BDBDBD" stroke-dasharray="3 3"/>
<line x1="1313.5" x2="1313.5" y1="17" y2="34" stroke="#000"/>
<line x1="1313.5" x2="1313.5" y1="35" y2="408" stroke="#BDBDBD" stroke-dasharray="3 3"/>
<line x1="1325.5" x2="1325.5" y1="17" y2="34" stroke="#000"/>
<line x1="1325.5" x2="1325.5" y1="35" y2="408" stroke="#BDBDBD" stroke-dasharray="3 3"/>
<line x1="1338.5" x2="1338.5" y1="17" y2="34" stroke="#000"/>
<line x1="1338.5" x2="1338.5" y1="35" y2="408" stroke="#BDBDBD" stroke-dasharray="3 3"/>
<line x1="1351.5" x2="1351.5" y1="17" y2="34" stroke="#000"/>
<line x1="1351.5" x2="1351.5" y1="35" y2="408" stroke="#BDBDBD" stroke-dasharray="3 3"/>
<line x1="1363.5" x2="1363.5" y1="17" y2="34" stroke="#000"/>
<line x1="1363.5" x2="1363.5" y1="35" y2="408" stroke="#BDBDBD" stroke-dasharray="3 3"/>
<line x1="1376.5" x2="1376.5" y1="1" y2="34" stroke="#000"/>
<line x1="1376.5" x2="1376.5" y1="35" y2="408" stroke="#747474"/>
<line x1="1389.5" x2="1389.5" y1="17" y2="34" stroke="#000"/>
<line x1="1389.5" x2="1389.5" y1="35" y2="408" stroke="#BDBDBD" stroke-dasharray="3 3"/>
<line x1="1401.5" x2="1401.5" y1="17" y2="34" stroke="#000"/>
<line x1="1401.5" x2="1401.5" y1="35" y2="408" stroke="#BDBDBD" stroke-dasharray="3 3"/>
<line x1="1414.5" x2="1414.5" y1="17" y2="34" stroke="#000"/>
<line x1="1414.5" x2="1414.5" y1="35" y2="408" stroke="#BDBDBD" stroke-dasharray="3 3"/>
<line x1="1426.5" x2="1426.5" y1="17" y2="34" stroke="#000"/>
<line x1="1426.5" x2="1426.5" y1="35" y2="408" stroke="#BDBDBD" stroke-dasharray="3 3"/>
<line x1="1439.5" x2="1439.5" y1="17" y2="34" stroke="#000"/>
<line x1="1439.5" x2="1439.5" y1="35" y2="408" stroke="#BDBDBD" stroke-dasharray="3 3"/>
<line x1="1452.5" x2="1452.5" y1="17" y2="34" stroke="#000"/>
<line x1="1452.5" x2="1452.5" y1="35" y2="408" stroke="#BDBDBD" stroke-dasharray="3 3"/>
<line x1="1464.5" x2="1464.5" y1="1" y2="34" stroke="#000"/>
<line x1="1464.5" x2="1464.5" y1="35" y2="408" stroke="#747474"/>
<line x1="1477.5" x2="1477.5" y1="17" y2="34" stroke="#000"/>
<line x1="1477.5" x2="1477.5" y1="35" y2="408" stroke="#BDBDBD" stroke-dasharray="3 3"/>
<line x1="1490.5" x2="1490.5" y1="17" y2="34" stroke="#000"/>
<line x1="1490.5" x2="1490.5" y1="35" y2="408" stroke="#BDBDBD" stroke-dasharray="3 3"/>
<line x1="1502.5" x2="1502.5" y1="17" y2="34" stroke="#000"/>
<line x1="1502.5" x2="1502.5" y1="35" y2="408" stroke="#BDBDBD" stroke-dasharray="3 3"/>
<line x1="1515.5" x2="1515.5" y1="17" y2="34" stroke="#000"/>
<line x1="1515.5" x2="1515.5" y1="35" y2="408" stroke="#BDBDBD" stroke-dasharray="3 3"/>
<line x1="1528.5" x2="1528.5" y1="17" y2="34" stroke="#000"/>
<line x1="1528.5" x2="1528.5" y1="35" y2="408" stroke="#BDBDBD" stroke-dasharray="3 3"/>
<line x1="1540.5" x2="1540.5" y1="17" y2="34" stroke="#000"/>
<line x1="1540.5" x2="1540.5" y1="35" y2="408" stroke="#BDBDBD" stroke-dasharray="3 3"/>
<line x1="1553.5" x2="1553.5" y1="1" y2="34" stroke="#000"/>
<line x1="1553.5" x2="1553.5" y1="35" y2="408" stroke="#747474"/>
<line x1="1566.5" x2="1566.5" y1="17" y2="34" stroke="#000"/>
<line x1="1566.5" x2="1566.5" y1="35" y2="408" stroke="#BDBDBD" stroke-dasharray="3 3"/>
<line x1="1578.5" x2="1578.5" y1="17" y2="34" stroke="#000"/>
<line x1="1578.5" x2="1578.5" y1="35" y2="408" stroke="#BDBDBD" stroke-dasharray="3 3"/>
<line x1="1591.5" x2="1591.5" y1="17" y2="34" stroke="#000"/>
<line x1="1591.5" x2="1591.5" y1="35" y2="408" stroke="#BDBDBD" stroke-dasharray="3 3"/>
<line x1="1604.5" x2="1604.5" y1="17" y2="34" stroke="#000"/>
<line x1="1604.5" x2="1604.5" y1="35" y2="408" stroke="#BDBDBD" stroke-dasharray="3 3"/>
<line x1="1616.5" x2="1616.5" y1="17" y2="34" stroke="#000"/>
<line x1="1616.5" x2="1616.5" y1="35" y2="408" stroke="#BDBDBD" stroke-dasharray="3 3"/>
<line x1="1629.5" x2="1629.5" y1="17" y2="34" stroke="#000"/>
<line x1="1629.5" x2="1629.5" y1="35" y2="408" stroke="#BDBDBD" stroke-dasharray="3 3"/>
<rect x="1198" y="35" width="3" height="373" fill="#0000FF" shape-rendering="crispEdges"/>
<line x1="1102" x2="1642" y1="50.5" y2="50.5" stroke="#BDBDBD" stroke-dasharray="3 3"/>
<line x1="1102" x2="1642" y1="68.5" y2="68.5" stroke="#BDBDBD" stroke-dasharray="3 3"/>
<line x1="1102" x2="1642" y1="86.5" y2="86.5" stroke="#BDBDBD" stroke-dasharray="3 3"/>
<line x1="1102" x2="1642" y1="104.5" y2="104.5" stroke="#BDBDBD" stroke-dasharray="3 3"/>
<line x1="1102" x2="1642" y1="122.5" y2="122.5" stroke="#BDBDBD" stroke-dasharray="3 3"/>
<line x1="1102" x2="1642" y1="138.5" y2="138.5" stroke="#BDBDBD" stroke-dasharray="3 3"/>
<line x1="1102" x2="1642" y1="156.5" y2="156.5" stroke="#BDBDBD" stroke-dasharray="3 3"/>
<line x1="1102" x2="1642" y1="174.5" y2="174.5" stroke="#BDBDBD" stroke-dasharray="3 3"/>
<line x1="1102" x2="1642" y1="190.5" y2="190.5" stroke="#BDBDBD" stroke-dasharray="3 3"/>
<line x1="1102" x2="1642" y1="206.5" y2="206.5" stroke="#BDBDBD" stroke-dasharray="3 3"/>
<line x1="1102" x2="1642" y1="224.5" y2="224.5" stroke="#BDBDBD" stroke-dasharray="3 3"/>
<line x1="1102" x2="1642" y1="242.5" y2="242.5" stroke="#BDBDBD" stroke-dasharray="3 3"/>
<line x1="1102" x2="1642" y1="260.5" y2="260.5" stroke="#BDBDBD" stroke-dasharray="3 3"/>
<line x1="1102" x2="1642" y1="276.5" y2="276.5" stroke="#BDBDBD" stroke-dasharray="3 3"/>
<line x1="1102" x2="1642" y1="294.5" y2="294.5" stroke="#BDBDBD" stroke-dasharray="3 3"/>
<line x1="1102" x2="1642" y1="312.5" y2="312.5" stroke="#BDBDBD" stroke-dasharray="3 3"/>
<line x1="1102" x2="1642" y1="330.5" y2="330.5" stroke="#BDBDBD" stroke-dasharray="3 3"/>
<line x1="1102" x2="1642" y1="348.5" y2="348.5" stroke="#BDBDBD" stroke-dasharray="3 3"/>
<line x1="1102" x2="1642" y1="364.5" y2="364.5" stroke="#BDBDBD" stroke-dasharray="3 3"/>
<line x1="1102" x2="1642" y1="382.5" y2="382.5" stroke="#BDBDBD" stroke-dasharray="3 3"/>
</g>
<text class="gt" x="1154.4" y="12" text-anchor="middle">Jun 01</text>
<text class="gt" x="1243.0" y="12" text-anchor="middle">Jun 08</text>
<text class="gt" x="1331.6" y="12" text-anchor="middle">Jun 15</text>
<text class="gt" x="1420.1" y="12" text-anchor="middle">Jun 22</text>
<text class="gt" x="1508.7" y="12" text-anchor="middle">Jun 29</text>
<text class="gt" x="1597.3" y="12" text-anchor="middle">Jul 06</text>
<text class="gt" x="1104.3" y="29" text-anchor="middle">S</text>
<text class="gt" x="1116.9" y="29" text-anchor="middle">S</text>
<text class="gt" x="1129.6" y="29" text-anchor="middle">M</text>
<text class="gt" x="1142.2" y="29" text-anchor="middle">T</text>
<text class="gt" x="1154.9" y="29" text-anchor="middle">W</text>
<text class="gt" x="1167.5" y="29" text-anchor="middle">T</text>
<text class="gt" x="1180.2" y="29" text-anchor="middle">F</text>
<text class="gt" x="1192.9" y="29" text-anchor="middle">S</text>
<text class="gt" x="1205.5" y="29" text-anchor="middle">S</text>
<text class="gt" x="1218.2" y="29" text-anchor="middle">M</text>
<text class="gt" x="1230.8" y="29" text-anchor="middle">T</text>
<text class="gt" x="1243.5" y="29" text-anchor="middle">W</text>
<text class="gt" x="1256.1" y="29" text-anchor="middle">T</text>
<text class="gt" x="1268.8" y="29" text-anchor="middle">F</text>
<text class="gt" x="1281.4" y="29" text-anchor="middle">S</text>
<text class="gt" x="1294.1" y="29" text-anchor="middle">S</text>
<text class="gt" x="1306.8" y="29" text-anchor="middle">M</text>
<text class="gt" x="1319.4" y="29" text-anchor="middle">T</text>
<text class="gt" x="1332.1" y="29" text-anchor="middle">W</text>
<text class="gt" x="1344.7" y="29" text-anchor="middle">T</text>
<text class="gt" x="1357.4" y="29" text-anchor="middle">F</text>
<text class="gt" x="1370.0" y="29" text-anchor="middle">S</text>
<text class="gt" x="1382.7" y="29" text-anchor="middle">S</text>
<text class="gt" x="1395.3" y="29" text-anchor="middle">M</text>
<text class="gt" x="1408.0" y="29" text-anchor="middle">T</text>
<text class="gt" x="1420.6" y="29" text-anchor="middle">W</text>
<text class="gt" x="1433.3" y="29" text-anchor="middle">T</text>
<text class="gt" x="1446.0" y="29" text-anchor="middle">F</text>
<text class="gt" x="1458.6" y="29" text-anchor="middle">S</text>
<text class="gt" x="1471.3" y="29" text-anchor="middle">S</text>
<text class="gt" x="1483.9" y="29" text-anchor="middle">M</text>
<text class="gt" x="1496.6" y="29" text-anchor="middle">T</text>
<text class="gt" x="1509.2" y="29" text-anchor="middle">W</text>
<text class="gt" x="1521.9" y="29" text-anchor="middle">T</text>
<text class="gt" x="1534.5" y="29" text-anchor="middle">F</text>
<text class="gt" x="1547.2" y="29" text-anchor="middle">S</text>
<text class="gt" x="1559.9" y="29" text-anchor="middle">S</text>
<text class="gt" x="1572.5" y="29" text-anchor="middle">M</text>
<text class="gt" x="1585.2" y="29" text-anchor="middle">T</text>
<text class="gt" x="1597.8" y="29" text-anchor="middle">W</text>
<text class="gt" x="1610.5" y="29" text-anchor="middle">T</text>
<text class="gt" x="1623.1" y="29" text-anchor="middle">F</text>
<text class="gt" x="1635.8" y="29" text-anchor="middle">S</text>
<text class="gt" x="1648.4" y="29" text-anchor="middle">S</text>
<g shape-rendering="crispEdges">
<rect x="1127" y="62" width="1" height="5" fill="#000"/>
<rect x="1127" y="66" width="14" height="1" fill="#000"/>
<rect x="1140" y="66" width="1" height="10" fill="#000"/>
<rect x="1140" y="75" width="13" height="1" fill="#000"/>
<rect x="1144" y="73" width="3" height="5" fill="#000"/><rect x="1147" y="74" width="3" height="3" fill="#000"/>
<rect x="1153" y="80" width="1" height="4" fill="#000"/>
<rect x="1140" y="83" width="14" height="1" fill="#000"/>
<rect x="1140" y="83" width="1" height="63" fill="#000"/>
<rect x="1140" y="145" width="13" height="1" fill="#000"/>
<rect x="1144" y="143" width="3" height="5" fill="#000"/><rect x="1147" y="144" width="3" height="3" fill="#000"/>
<rect x="1140" y="93" width="13" height="1" fill="#000"/>
<rect x="1144" y="91" width="3" height="5" fill="#000"/><rect x="1147" y="92" width="3" height="3" fill="#000"/>
<rect x="1157" y="150" width="1" height="4" fill="#000"/>
<rect x="1152" y="153" width="6" height="1" fill="#000"/>
<rect x="1152" y="153" width="1" height="11" fill="#000"/>
<rect x="1152" y="163" width="13" height="1" fill="#000"/>
<rect x="1156" y="161" width="3" height="5" fill="#000"/><rect x="1159" y="162" width="3" height="3" fill="#000"/>
<rect x="1169" y="168" width="1" height="5" fill="#000"/>
<rect x="1165" y="172" width="5" height="1" fill="#000"/>
<rect x="1165" y="172" width="1" height="42" fill="#000"/>
<rect x="1165" y="213" width="13" height="1" fill="#000"/>
<rect x="1169" y="211" width="3" height="5" fill="#000"/><rect x="1172" y="212" width="3" height="3" fill="#000"/>
<rect x="1449" y="97" width="1" height="4" fill="#000"/>
<rect x="1449" y="100" width="13" height="1" fill="#000"/>
<rect x="1461" y="100" width="1" height="12" fill="#000"/>
<rect x="1245" y="218" width="1" height="5" fill="#FF0000"/>
<rect x="1241" y="222" width="5" height="1" fill="#FF0000"/>
<rect x="1241" y="222" width="1" height="10" fill="#FF0000"/>
<rect x="1241" y="231" width="13" height="1" fill="#FF0000"/>
<rect x="1245" y="229" width="3" height="5" fill="#FF0000"/><rect x="1248" y="230" width="3" height="3" fill="#FF0000"/>
<rect x="1258" y="236" width="1" height="5" fill="#FF0000"/>
<rect x="1253" y="240" width="52" height="1" fill="#FF0000"/>
<rect x="1304" y="240" width="1" height="10" fill="#FF0000"/>
<rect x="1304" y="249" width="13" height="1" fill="#FF0000"/>
<rect x="1308" y="247" width="3" height="5" fill="#FF0000"/><rect x="1311" y="248" width="3" height="3" fill="#FF0000"/>
<rect x="1253" y="240" width="1" height="44" fill="#FF0000"/>
<rect x="1253" y="283" width="13" height="1" fill="#FF0000"/>
<rect x="1257" y="281" width="3" height="5" fill="#FF0000"/><rect x="1260" y="282" width="3" height="3" fill="#FF0000"/>
<rect x="1271" y="288" width="1" height="4" fill="#FF0000"/>
<rect x="1271" y="291" width="21" height="1" fill="#FF0000"/>
<rect x="1291" y="291" width="1" height="11" fill="#FF0000"/>
<rect x="1291" y="301" width="13" height="1" fill="#FF0000"/>
<rect x="1295" y="299" width="3" height="5" fill="#FF0000"/><rect x="1298" y="300" width="3" height="3" fill="#FF0000"/>
<rect x="1308" y="306" width="1" height="5" fill="#FF0000"/>
<rect x="1304" y="310" width="5" height="1" fill="#FF0000"/>
<rect x="1304" y="310" width="1" height="10" fill="#FF0000"/>
<rect x="1304" y="319" width="13" height="1" fill="#FF0000"/>
<rect x="1308" y="317" width="3" height="5" fill="#FF0000"/><rect x="1311" y="318" width="3" height="3" fill="#FF0000"/>
<rect x="1321" y="324" width="1" height="5" fill="#FF0000"/>
<rect x="1321" y="328" width="22" height="1" fill="#FF0000"/>
<rect x="1342" y="328" width="1" height="10" fill="#FF0000"/>
<rect x="1342" y="337" width="13" height="1" fill="#FF0000"/>
<rect x="1346" y="335" width="3" height="5" fill="#FF0000"/><rect x="1349" y="336" width="3" height="3" fill="#FF0000"/>
<rect x="1359" y="329" width="1" height="6" fill="#FF0000"/>
<rect x="1359" y="329" width="14" height="1" fill="#FF0000"/>
<rect x="1372" y="249" width="1" height="81" fill="#FF0000"/>
<rect x="1360" y="249" width="13" height="1" fill="#FF0000"/>
<rect x="1366" y="247" width="3" height="5" fill="#FF0000"/><rect x="1363" y="248" width="3" height="3" fill="#FF0000"/>
<rect x="1359" y="254" width="1" height="5" fill="#FF0000"/>
<rect x="1359" y="258" width="22" height="1" fill="#FF0000"/>
<rect x="1380" y="258" width="1" height="114" fill="#FF0000"/>
<rect x="1380" y="371" width="13" height="1" fill="#FF0000"/>
<rect x="1384" y="369" width="3" height="5" fill="#FF0000"/><rect x="1387" y="370" width="3" height="3" fill="#FF0000"/>
<rect x="1435" y="376" width="1" height="5" fill="#FF0000"/>
<rect x="1430" y="380" width="6" height="1" fill="#FF0000"/>
<rect x="1430" y="380" width="1" height="10" fill="#FF0000"/>
<rect x="1430" y="389" width="13" height="1" fill="#FF0000"/>
<rect x="1434" y="387" width="3" height="5" fill="#FF0000"/><rect x="1437" y="388" width="3" height="3" fill="#FF0000"/>
<rect x="1448" y="382" width="1" height="5" fill="#FF0000"/>
<rect x="1448" y="382" width="14" height="1" fill="#FF0000"/>
<rect x="1461" y="111" width="1" height="272" fill="#FF0000"/>
<rect x="1449" y="111" width="13" height="1" fill="#FF0000"/>
<rect x="1455" y="109" width="3" height="5" fill="#FF0000"/><rect x="1452" y="110" width="3" height="3" fill="#FF0000"/>
</g>
<rect x="1123" y="38" width="330" height="5" fill="#000" shape-rendering="crispEdges"/><path d="M1123 38 L1132 38 L1127.5 47.3 Z M1453 38 L1444 38 L1448.5 47.3 Z" fill="#000"/>
<path d="M1122.8 58.5 L1127.5 53.8 L1132.2 58.5 L1127.5 63.2 Z" fill="#000"/>
<path d="M1148.8 76.5 L1153.5 71.8 L1158.2 76.5 L1153.5 81.2 Z" fill="#000"/>
<rect x="1153" y="92" width="47" height="5" fill="#00008B" shape-rendering="crispEdges"/>
<rect x="1216" y="92" width="233" height="5" fill="#008000" shape-rendering="crispEdges"/>
<path d="M1443.8 112.5 L1448.5 107.8 L1453.2 112.5 L1448.5 117.2 Z" fill="#000"/>
<rect x="1149" y="126" width="25" height="5" fill="#000" shape-rendering="crispEdges"/><path d="M1149 126 L1158 126 L1153.5 135.3 Z M1174 126 L1165 126 L1169.5 135.3 Z" fill="#000"/>
<rect x="1153.5" y="142.5" width="4" height="8" fill="#0000FF" stroke="#000" stroke-width="1" shape-rendering="crispEdges"/>
<rect x="1165.5" y="160.5" width="4" height="8" fill="#0000FF" stroke="#000" stroke-width="1" shape-rendering="crispEdges"/>
<rect x="1174" y="178" width="279" height="5" fill="#000" shape-rendering="crispEdges"/><path d="M1174 178 L1183 178 L1178.5 187.3 Z M1453 178 L1444 178 L1448.5 187.3 Z" fill="#000"/>
<rect x="1174" y="194" width="190" height="5" fill="#000" shape-rendering="crispEdges"/><path d="M1174 194 L1183 194 L1178.5 203.3 Z M1364 194 L1355 194 L1359.5 203.3 Z" fill="#000"/>
<rect x="1178.5" y="210.5" width="21" height="8" fill="#0000FF" stroke="#000" stroke-width="1" shape-rendering="crispEdges"/>
<rect x="1216.5" y="210.5" width="29" height="8" fill="#FF0000" stroke="#000" stroke-width="1" shape-rendering="crispEdges"/>
<rect x="1254.5" y="228.5" width="4" height="8" fill="#FF0000" stroke="#000" stroke-width="1" shape-rendering="crispEdges"/>
<rect x="1317.5" y="246.5" width="42" height="8" fill="#FF0000" stroke="#000" stroke-width="1" shape-rendering="crispEdges"/>
<rect x="1262" y="264" width="102" height="5" fill="#000" shape-rendering="crispEdges"/><path d="M1262 264 L1271 264 L1266.5 273.3 Z M1364 264 L1355 264 L1359.5 273.3 Z" fill="#000"/>
<rect x="1266.5" y="280.5" width="5" height="8" fill="#FF0000" stroke="#000" stroke-width="1" shape-rendering="crispEdges"/>
<rect x="1304.5" y="298.5" width="4" height="8" fill="#FF0000" stroke="#000" stroke-width="1" shape-rendering="crispEdges"/>
<rect x="1317.5" y="316.5" width="4" height="8" fill="#FF0000" stroke="#000" stroke-width="1" shape-rendering="crispEdges"/>
<rect x="1355.5" y="334.5" width="4" height="8" fill="#FF0000" stroke="#000" stroke-width="1" shape-rendering="crispEdges"/>
<rect x="1389" y="352" width="64" height="5" fill="#000" shape-rendering="crispEdges"/><path d="M1389 352 L1398 352 L1393.5 361.3 Z M1453 352 L1444 352 L1448.5 361.3 Z" fill="#000"/>
<rect x="1393.5" y="368.5" width="42" height="8" fill="#FF0000" stroke="#000" stroke-width="1" shape-rendering="crispEdges"/>
<rect x="1443.5" y="386.5" width="5" height="8" fill="#FF0000" stroke="#000" stroke-width="1" shape-rendering="crispEdges"/>
<text class="gl" x="1458" y="45.3" letter-spacing="0.124">Pipe Repairs &amp; Improvement</text>
<text class="gl" x="1137.5" y="61.3" letter-spacing="0.376">Contract Award Date</text>
<text class="gl" x="1162.5" y="79.3" letter-spacing="0.119">Start Project</text>
<text class="gl" x="1458.5" y="97.3" letter-spacing="0.093">Project Management</text>
<text class="gl" x="1458.5" y="115.3" letter-spacing="0.121">Project Completion Date</text>
<text class="gl" x="1179.5" y="133.3" letter-spacing="0.059">Demolition Piping</text>
<text class="gl" x="1167.5" y="149.3" letter-spacing="0.089">Drain Piping System</text>
<text class="gl" x="1179" y="167.3" letter-spacing="0.128">Remove Damaged Piping</text>
<text class="gl" x="1458" y="185.3" letter-spacing="0.109">Installation Piping System</text>
<text class="gl" x="1369" y="201.3" letter-spacing="-0.007">Piping</text>
<text class="gl" x="1255.5" y="217.3" letter-spacing="0.115">Install Piping &amp; Couplings</text>
<text class="gl" x="1268.5" y="235.3" letter-spacing="0.188">Test Piping at Pressure</text>
<text class="gl" x="1369.5" y="253.3" letter-spacing="0.158">Insulate Piping</text>
<text class="gl" x="1369.5" y="271.3" letter-spacing="0.074">Thrustblock</text>
<text class="gl" x="1280.5" y="287.3" letter-spacing="-0.056">Set Forms</text>
<text class="gl" x="1318" y="305.3" letter-spacing="-0.079">Lay Rebar</text>
<text class="gl" x="1331.5" y="323.3" letter-spacing="0.063">Pour Concrete</text>
<text class="gl" x="1368.5" y="341.3" letter-spacing="-0.045">Strike Forms</text>
<text class="gl" x="1458" y="359.3" letter-spacing="0.27">Quality Assuarance</text>
<text class="gl" x="1445.5" y="375.3" letter-spacing="0.17">Write Quality Assurance Report</text>
<text class="gl" x="1458" y="393.3" letter-spacing="0.139">Final Quality Assurance Inspection</text>
<g shape-rendering="crispEdges"><rect x="1102" y="408" width="540" height="17" fill="#F0F0F0"/><rect x="1273" y="409" width="17" height="15" fill="#CDCDCD"/></g>
<path d="M1112.5 412.8 L1108.5 416.5 L1112.5 420.2" fill="none" stroke="#404040" stroke-width="2.1"/>
</svg>
<div class="b" style="left:1642px;top:0;width:2px;height:35px;background:#000"></div>
<div class="b" style="left:1642px;top:35px;width:1px;height:373px;background:#f4f4f4"></div>
<div class="b" style="left:1643px;top:35px;width:1px;height:373px;background:#404040"></div>
<div id="bp">
<div class="b" style="left:1px;top:425px;width:1642px;height:1px;background:#8c8c8c"></div>
<div class="b" style="left:1px;top:426px;width:1642px;height:1px;background:#ffffff"></div>
<div class="b" style="left:1px;top:427px;width:1642px;height:2px;background:#f0f0f0"></div>
<div class="b" style="left:1px;top:429px;width:1642px;height:1px;background:#a0a0a0"></div>
<div class="b" style="left:1px;top:430px;width:1642px;height:1px;background:#696969"></div>
<div class="b" style="left:1px;top:431px;width:1642px;height:25px;background:#d9d9d9"></div>
<div class="b" style="left:1px;top:456px;width:1642px;height:1px;background:#696969"></div>
<div class="b" style="left:1px;top:457px;width:1642px;height:97px;background:#f0f0f0"></div>
<div class="b" style="left:1px;top:431px;width:3px;height:123px;background:#f0f0f0"></div>
<div class="b" style="left:4px;top:435px;width:1px;height:119px;background:#696969"></div>
<div class="tab" style="left:4px;width:48px;letter-spacing:-0.219px">General</div>
<div class="tab" style="left:52px;width:39px;letter-spacing:-0.064px">Status</div>
<div class="tab" style="left:91px;width:67px;letter-spacing:-0.053px">Resources</div>
<div class="tab" style="left:158px;width:76px;letter-spacing:0.037px">Predecessors</div>
<div class="tab" style="left:234px;width:69px;letter-spacing:0.095px">Successors</div>
<div class="tab" style="left:303px;width:41px;letter-spacing:-0.259px">Codes</div>
<div class="tab" style="left:344px;width:56px;letter-spacing:-0.274px">Notebook</div>
<div class="tab" style="left:400px;width:37px;letter-spacing:-0.126px">Steps</div>
<div class="tab" style="left:437px;width:57px;letter-spacing:-0.176px">Feedback</div>
<div class="tab" style="left:494px;width:70px;letter-spacing:-0.233px">WPs &amp; Docs</div>
<div class="tab" style="left:564px;width:58px;letter-spacing:-0.126px">Expenses</div>
<div class="tab" style="left:622px;width:55px;letter-spacing:-0.38px">Summary</div>
<div class="tab" style="left:677px;width:74px;letter-spacing:-0.226px">Relationships</div>
<div class="b" style="left:751px;top:435px;width:1px;height:21px;background:#696969"></div>
<div class="spin" style="left:24px;top:460px;width:54px;height:24px"><div class="sl"></div><svg width="54" height="24" style="position:absolute;left:0;top:0"><path d="M22.5 7 L26.3 3 L30.1 7 Z" fill="#000"/><path d="M22.5 15.5 L26.3 19.5 L30.1 15.5 Z" fill="#000"/></svg></div>
<div class="lb" style="left:171px;top:462px;letter-spacing:0.07px">Activity</div>
<div class="inp" style="left:214px;top:462px;width:221px;height:20px;letter-spacing:-0.202px">A1060</div>
<div class="inp" style="left:449px;top:462px;width:739px;height:20px;letter-spacing:-0.271px">Install Piping &amp; Couplings</div>
<div class="lb" style="left:1305px;top:462px;letter-spacing:-0.262px">Project</div>
<div class="inp ro" style="left:1348px;top:462px;width:296px;height:20px;letter-spacing:-0.813px">PIPE REPAIRS-1</div>
<div class="b" style="left:11px;top:489px;width:1632px;height:1px;background:#a0a0a0"></div>
<div class="b" style="left:11px;top:490px;width:1632px;height:17px;background:#f0f0f0"></div>
<div class="b" style="left:11px;top:507px;width:1632px;height:1px;background:#000"></div>
<div class="b" style="left:11px;top:508px;width:1632px;height:46px;background:#fff"></div>
<div class="b" style="left:11px;top:490px;width:1px;height:64px;background:#696969"></div>
<div class="b" style="left:12px;top:508px;width:1197px;height:17px;background:#0078D7"></div>
<div class="b" style="left:143px;top:490px;width:1px;height:17px;background:#000"></div>
<div class="b" style="left:142px;top:490px;width:1px;height:17px;background:#fff"></div>
<div class="b" style="left:143px;top:508px;width:1px;height:17px;background:#a8c8e8"></div>
<div class="rh" style="left:12px;width:131px;top:490px;padding-left:3px;letter-spacing:-0.302px">Resource ID Name</div>
<div class="rv" style="left:34px;top:508px;letter-spacing:-0.61px">LUMPSUM.Lump Sum</div>
<div class="b" style="left:240px;top:490px;width:1px;height:17px;background:#000"></div>
<div class="b" style="left:239px;top:490px;width:1px;height:17px;background:#fff"></div>
<div class="b" style="left:240px;top:508px;width:1px;height:17px;background:#a8c8e8"></div>
<div class="rh" style="left:144px;width:96px;top:490px;text-align:right;padding-right:3px;letter-spacing:-0.285px">Original Duration</div>
<div class="rv" style="left:144px;width:96px;top:508px;text-align:right;padding-right:3px;letter-spacing:-0.225px">4.00d</div>
<div class="b" style="left:354px;top:490px;width:1px;height:17px;background:#000"></div>
<div class="b" style="left:353px;top:490px;width:1px;height:17px;background:#fff"></div>
<div class="b" style="left:354px;top:508px;width:1px;height:17px;background:#a8c8e8"></div>
<div class="rh" style="left:241px;width:113px;top:490px;text-align:right;padding-right:3px;letter-spacing:-0.182px">Budgeted Units / Time</div>
<div class="rv" style="left:241px;width:113px;top:508px;text-align:right;padding-right:3px;letter-spacing:-0.145px">1000.00h/d</div>
<div class="b" style="left:437px;top:490px;width:1px;height:17px;background:#000"></div>
<div class="b" style="left:436px;top:490px;width:1px;height:17px;background:#fff"></div>
<div class="b" style="left:437px;top:508px;width:1px;height:17px;background:#a8c8e8"></div>
<div class="rh" style="left:355px;width:82px;top:490px;text-align:right;padding-right:3px;letter-spacing:-0.208px">Budgeted Units</div>
<div class="rv" style="left:355px;width:82px;top:508px;text-align:right;padding-right:3px;letter-spacing:-0.223px">4000.00h</div>
<div class="b" style="left:522px;top:490px;width:1px;height:17px;background:#000"></div>
<div class="b" style="left:521px;top:490px;width:1px;height:17px;background:#fff"></div>
<div class="b" style="left:522px;top:508px;width:1px;height:17px;background:#a8c8e8"></div>
<div class="rh" style="left:438px;width:84px;top:490px;text-align:right;padding-right:3px;letter-spacing:-0.133px">Actual Units</div>
<div class="b" style="left:608px;top:490px;width:1px;height:17px;background:#000"></div>
<div class="b" style="left:607px;top:490px;width:1px;height:17px;background:#fff"></div>
<div class="b" style="left:608px;top:508px;width:1px;height:17px;background:#a8c8e8"></div>
<div class="rh" style="left:523px;width:85px;top:490px;text-align:right;padding-right:3px;letter-spacing:-0.36px">Remaining Units</div>
<div class="rv" style="left:523px;width:85px;top:508px;text-align:right;padding-right:3px;letter-spacing:-0.223px">3000.00h</div>
<div class="b" style="left:725px;top:490px;width:1px;height:17px;background:#000"></div>
<div class="b" style="left:724px;top:490px;width:1px;height:17px;background:#fff"></div>
<div class="b" style="left:725px;top:508px;width:1px;height:17px;background:#a8c8e8"></div>
<div class="rh" style="left:609px;width:116px;top:490px;text-align:right;padding-right:3px;letter-spacing:-0.274px">At Completion Units</div>
<div class="rv" style="left:609px;width:116px;top:508px;text-align:right;padding-right:3px;letter-spacing:-0.223px">4000.00h</div>
<div class="b" style="left:806px;top:490px;width:1px;height:17px;background:#000"></div>
<div class="b" style="left:805px;top:490px;width:1px;height:17px;background:#fff"></div>
<div class="b" style="left:806px;top:508px;width:1px;height:17px;background:#a8c8e8"></div>
<div class="rh" style="left:726px;width:80px;top:490px;text-align:right;padding-right:3px;letter-spacing:-0.175px">Budgeted Cost</div>
<div class="rv" style="left:726px;width:80px;top:508px;text-align:right;padding-right:3px;letter-spacing:-0.148px">$4,000.00</div>
<div class="b" style="left:872px;top:490px;width:1px;height:17px;background:#000"></div>
<div class="b" style="left:871px;top:490px;width:1px;height:17px;background:#fff"></div>
<div class="b" style="left:872px;top:508px;width:1px;height:17px;background:#a8c8e8"></div>
<div class="rh" style="left:807px;width:65px;top:490px;text-align:right;padding-right:3px;letter-spacing:-0.059px">Actual Cost</div>
<div class="rv" style="left:807px;width:65px;top:508px;text-align:right;padding-right:3px;letter-spacing:-0.148px">$1,000.00</div>
<div class="b" style="left:970px;top:490px;width:1px;height:17px;background:#000"></div>
<div class="b" style="left:969px;top:490px;width:1px;height:17px;background:#fff"></div>
<div class="b" style="left:970px;top:508px;width:1px;height:17px;background:#a8c8e8"></div>
<div class="rh" style="left:873px;width:97px;top:490px;text-align:right;padding-right:3px;letter-spacing:-0.368px">Remaining Cost</div>
<div class="rv" style="left:873px;width:97px;top:508px;text-align:right;padding-right:3px;letter-spacing:-0.148px">$3,000.00</div>
<div class="b" style="left:1071px;top:490px;width:1px;height:17px;background:#000"></div>
<div class="b" style="left:1070px;top:490px;width:1px;height:17px;background:#fff"></div>
<div class="b" style="left:1071px;top:508px;width:1px;height:17px;background:#a8c8e8"></div>
<div class="rh" style="left:971px;width:100px;top:490px;text-align:right;padding-right:3px;letter-spacing:-0.226px">At Completion Cost</div>
<div class="rv" style="left:971px;width:100px;top:508px;text-align:right;padding-right:3px;letter-spacing:-0.148px">$4,000.00</div>
<div class="b" style="left:1209px;top:490px;width:1px;height:17px;background:#000"></div>
<div class="b" style="left:1208px;top:490px;width:1px;height:17px;background:#fff"></div>
<div class="b" style="left:1209px;top:508px;width:1px;height:17px;background:#a8c8e8"></div>
<div class="rh" style="left:1072px;width:137px;top:490px;text-align:center;letter-spacing:-0.078px">Calculate costs from units</div>
<svg style="position:absolute;left:12px;top:508px" width="18" height="17" viewBox="0 0 18 17">
<path d="M1 17 C1 12.5 3 11.5 8.5 11.5 C13 11.5 14.5 12.5 14.5 17 Z" fill="#154f9e"/>
<ellipse cx="8.5" cy="7" rx="3.6" ry="4.2" fill="#c9a27c"/>
<path d="M4.4 6.8 C3.8 0.6 13.2 0.6 12.6 6.8 C11.6 4.4 5.4 4.4 4.4 6.8 Z" fill="#55553a"/>
<path d="M7 11 L8.5 13.5 L10 11 Z" fill="#e8e8e8"/>
<path d="M12.2 10.6 L13.2 13 L15.8 13 L13.7 14.5 L14.5 17 L12.2 15.5 L9.9 17 L10.7 14.5 L8.6 13 L11.2 13 Z" fill="#ffee3a"/>
</svg>
<div class="b" style="left:438px;top:508px;width:84px;height:17px;background:#fff;border-top:1px solid #a0a0a0"></div>
<div class="rv" style="left:441px;top:508px;color:#000;letter-spacing:-.2px">1200</div>
<div class="b" style="left:440px;top:525px;width:83px;height:1px;background:#e0e0e0"></div>
<div class="b" style="left:1134px;top:510px;width:12px;height:12px;background:#fff;border:1px solid #333;box-sizing:border-box"></div>
<svg style="position:absolute;left:1134px;top:510px" width="12" height="12"><path d="M2.5 5.5 L4.8 8.2 L9.5 2.8" fill="none" stroke="#000" stroke-width="1.8"/></svg>
<svg style="position:absolute;left:492px;top:514px" width="11" height="18"><path d="M2 1.5 H4.5 Q5.5 1.5 5.5 2.5 V15 Q5.5 16 4.5 16 H2 M9 1.5 H6.5 Q5.5 1.5 5.5 2.5 M5.5 15 Q5.5 16 6.5 16 H9" fill="none" stroke="#000" stroke-width="1"/></svg>
<div class="red" style="left:91px;top:434px;width:67px;height:26px"></div>
<div class="red" style="left:437px;top:486px;width:89px;height:50px"></div>
</div>
<div class="b" style="left:0;top:0;width:1px;height:556px;background:#000"></div>
<div class="b" style="left:1643px;top:425px;width:1px;height:131px;background:#4a4a4a"></div>
<div class="b" style="left:0;top:554px;width:1644px;height:2px;background:#000"></div>
</body></html>
